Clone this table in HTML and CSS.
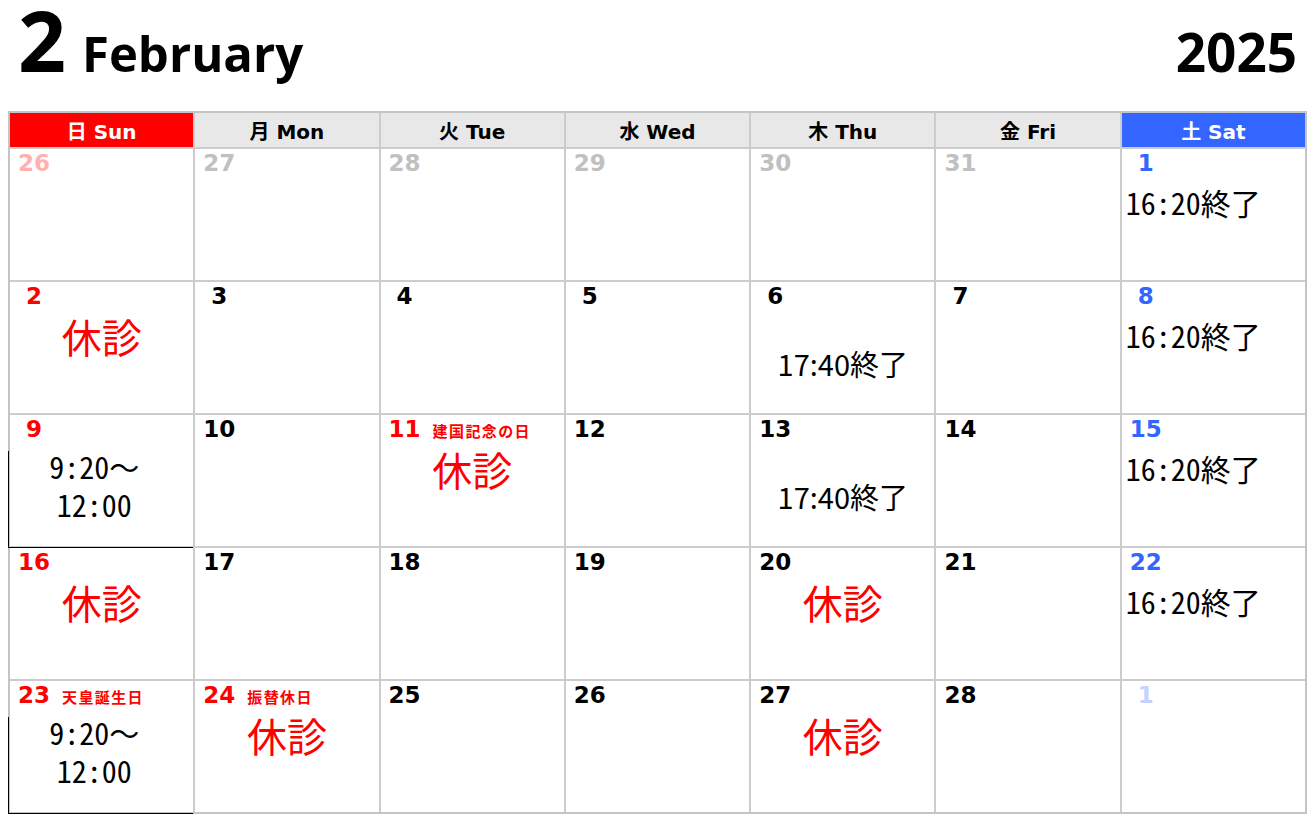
FILE: index.html
```html
<!DOCTYPE html>
<html lang="ja">
<head>
<meta charset="utf-8">
<title>2025 February</title>
<link rel="stylesheet" href="styles.css">
</head>
<body>
<div class="page">
  <header class="title">
    <span class="month-num">2</span>
    <span class="month-name">February</span>
    <span class="year">2025</span>
  </header>

  <div class="cal">
    <div class="dow sun">日 Sun</div>
    <div class="dow">月 Mon</div>
    <div class="dow">火 Tue</div>
    <div class="dow">水 Wed</div>
    <div class="dow">木 Thu</div>
    <div class="dow">金 Fri</div>
    <div class="dow sat">土 Sat</div>

    <!-- week 1 -->
    <div class="cell"><div class="num prev-sun">26</div></div>
    <div class="cell"><div class="num prev">27</div></div>
    <div class="cell"><div class="num prev">28</div></div>
    <div class="cell"><div class="num prev">29</div></div>
    <div class="cell"><div class="num prev">30</div></div>
    <div class="cell"><div class="num prev">31</div></div>
    <div class="cell"><div class="num sat-c one">1</div><div class="end">16:20終了</div></div>

    <!-- week 2 -->
    <div class="cell"><div class="num sun-c one">2</div><div class="closed">休診</div></div>
    <div class="cell"><div class="num one">3</div></div>
    <div class="cell"><div class="num one">4</div></div>
    <div class="cell"><div class="num one">5</div></div>
    <div class="cell"><div class="num one">6</div><div class="late">17:40終了</div></div>
    <div class="cell"><div class="num one">7</div></div>
    <div class="cell"><div class="num sat-c one">8</div><div class="end">16:20終了</div></div>

    <!-- week 3 -->
    <div class="cell"><div class="num sun-c one">9</div><div class="timebox"><div class="times">9:20<span class="wave">～</span></div><div class="times">12:00</div></div></div>
    <div class="cell"><div class="num">10</div></div>
    <div class="cell"><div class="num sun-c">11<span class="holiday">建国記念の日</span></div><div class="closed">休診</div></div>
    <div class="cell"><div class="num">12</div></div>
    <div class="cell"><div class="num">13</div><div class="late">17:40終了</div></div>
    <div class="cell"><div class="num">14</div></div>
    <div class="cell"><div class="num sat-c">15</div><div class="end">16:20終了</div></div>

    <!-- week 4 -->
    <div class="cell"><div class="num sun-c">16</div><div class="closed">休診</div></div>
    <div class="cell"><div class="num">17</div></div>
    <div class="cell"><div class="num">18</div></div>
    <div class="cell"><div class="num">19</div></div>
    <div class="cell"><div class="num">20</div><div class="closed">休診</div></div>
    <div class="cell"><div class="num">21</div></div>
    <div class="cell"><div class="num sat-c">22</div><div class="end">16:20終了</div></div>

    <!-- week 5 -->
    <div class="cell"><div class="num sun-c">23<span class="holiday">天皇誕生日</span></div><div class="timebox"><div class="times">9:20<span class="wave">～</span></div><div class="times">12:00</div></div></div>
    <div class="cell"><div class="num sun-c">24<span class="holiday">振替休日</span></div><div class="closed">休診</div></div>
    <div class="cell"><div class="num">25</div></div>
    <div class="cell"><div class="num">26</div></div>
    <div class="cell"><div class="num">27</div><div class="closed">休診</div></div>
    <div class="cell"><div class="num">28</div></div>
    <div class="cell"><div class="num next-sat one">1</div></div>
  </div>
</div>
</body>
</html>
```

FILE: styles.css
```css
* { box-sizing: border-box; }

html, body {
  margin: 0;
  padding: 0;
  background: #ffffff;
}

body {
  font-family: "Noto Sans CJK JP", "Noto Sans", sans-serif;
  color: #000;
}

.page {
  width: 1316px;
  padding: 0 0 0 8px;
}

/* ---------- title ---------- */
.title {
  display: flex;
  align-items: baseline;
  height: 111px;
  width: 1299px;
  padding: 0 10px 0 10px;
  font-family: "Open Sans", "DejaVu Sans", sans-serif;
  font-weight: 700;
}

.month-num {
  font-size: 84px;
  line-height: 79px;
}

.month-name {
  font-size: 49px;
  line-height: 50px;
  margin-left: 16px;
}

.year {
  font-size: 53px;
  line-height: 50px;
  margin-left: auto;
}

/* ---------- calendar grid ---------- */
.cal {
  display: grid;
  grid-template-columns: repeat(7, 1fr);
  grid-template-rows: 34px repeat(5, 131px);
  gap: 2px;
  width: 1299px;
  background: #cccccc;
  border: 2px solid #c4c4c4;
}

.dow {
  display: flex;
  align-items: center;
  justify-content: center;
  background: #e8e8e8;
  font-family: "DejaVu Sans", "Noto Sans CJK JP", sans-serif;
  font-weight: 700;
  font-size: 20px;
  color: #000;
}

.dow.sun { background: #ff0000; color: #fff; }
.dow.sat { background: #3366ff; color: #fff; }

.cell {
  display: flex;
  flex-direction: column;
  background: #fff;
  min-width: 0;
}

.num {
  display: flex;
  align-items: baseline;
  height: 30px;
  padding-left: 8px;
  font-family: "DejaVu Sans", sans-serif;
  font-weight: 700;
  font-size: 23px;
  line-height: 28px;
  color: #000;
  white-space: nowrap;
}

.num.one { padding-left: 16px; }

.prev { color: #c0c0c0; }
.prev-sun { color: #ffb0b0; }
.sun-c { color: #ff0000; }
.sat-c { color: #3366ff; }
.next-sat { color: #c4d2ff; }

.holiday {
  font-family: "Noto Sans CJK JP", sans-serif;
  font-weight: 700;
  font-size: 15px;
  letter-spacing: 1.4px;
  margin-left: 12px;
  color: #ff0000;
}

.closed {
  margin-top: 4px;
  text-align: center;
  font-size: 40px;
  line-height: 40px;
  color: #ff0000;
}

.end {
  margin-top: 8px;
  padding-left: 4px;
  font-size: 30px;
  line-height: 30px;
  font-feature-settings: "hwid" 1;
  white-space: nowrap;
}

.late {
  margin-top: 37px;
  text-align: center;
  font-size: 29px;
  line-height: 29px;
  white-space: nowrap;
}

.timebox {
  flex: 1;
  margin: 6px 0 -2px -2px;
  border-left: 1px solid #000;
  border-bottom: 1px solid #000;
}

.times {
  height: 38px;
  padding-right: 14px;
  text-align: center;
  font-size: 30px;
  line-height: 38px;
  font-feature-settings: "hwid" 1;
  white-space: nowrap;
}

.times:first-child {
  margin-top: -4px;
}

.wave {
  font-feature-settings: normal;
}
```
